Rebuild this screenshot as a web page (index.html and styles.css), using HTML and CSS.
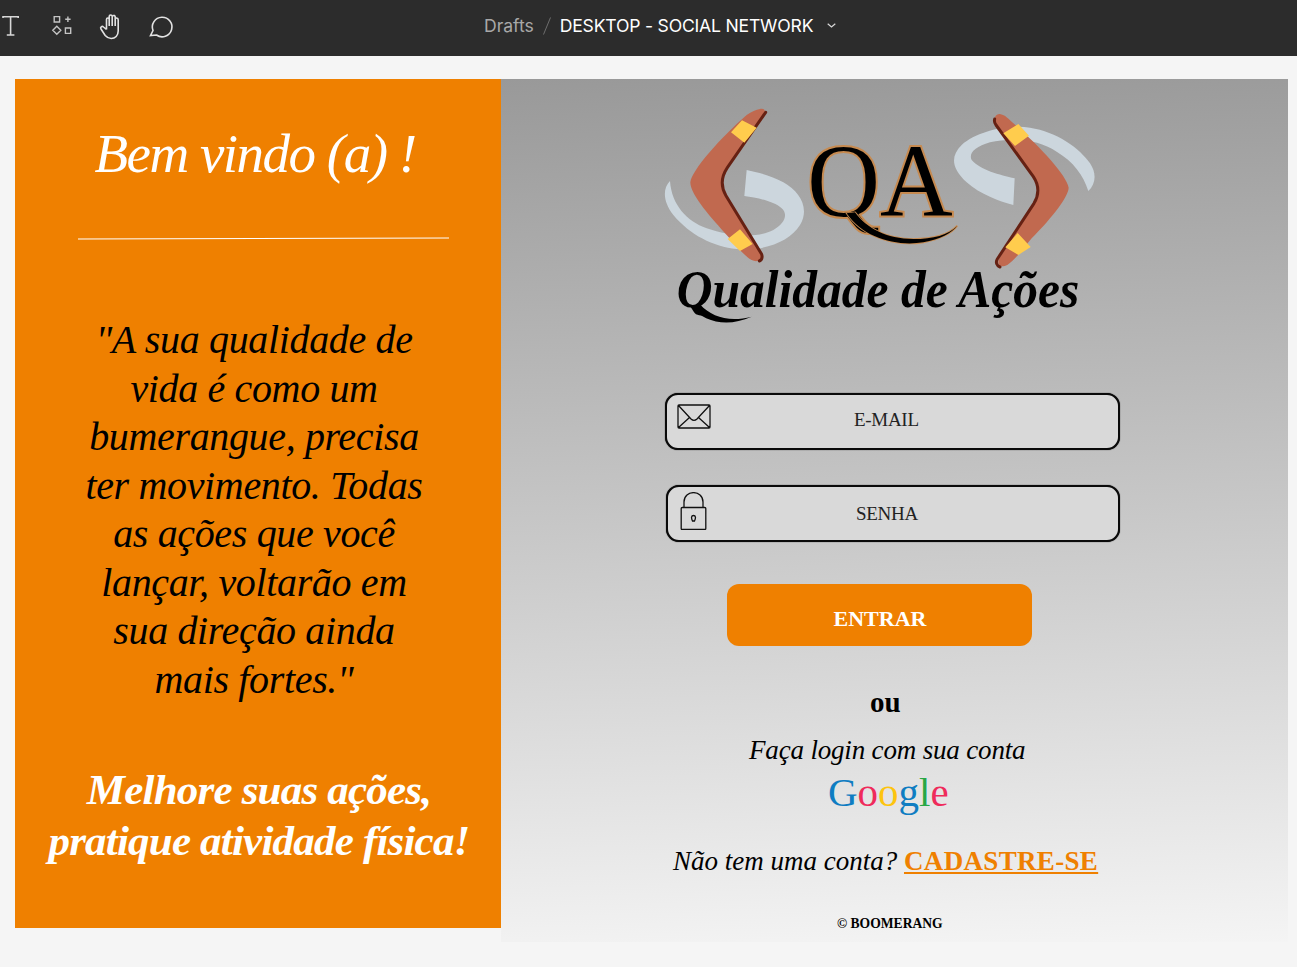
FILE: index.html
```html
<!DOCTYPE html>
<html lang="pt">
<head>
<meta charset="utf-8">
<title>DESKTOP - SOCIAL NETWORK</title>
<link rel="stylesheet" href="styles.css">
</head>
<body>
<header class="toolbar">
  <div class="tools">
    <svg class="tool tool-t" viewBox="0 0 24 28"><path d="M3 4V2.800H18.200V4M10.600 2.800V21M6.800 21H14.400"/></svg>
    <svg class="tool" viewBox="0 0 24 28"><path d="M4.200 2.600H9.600V8H4.200ZM15.200 5.300H20.600M17.900 2.600V8M2.800 16.300L6.800 12.300L10.800 16.300L6.800 20.300ZM15.400 14H20.700V19.400H15.400Z"/></svg>
    <svg class="tool tool-bright" viewBox="0 0 24 28"><path d="M6.500 15.500V5.500C6.500 3.500 9.200 3.500 9.200 5.500V2.500C9.200.5 12.200.5 12.200 2.500V3C12.200 1 15.200.8 15.200 3V5.500C15.200 3.500 18.200 3.500 18.200 6V17C18.200 21.500 15.200 24.500 11.200 24.500C8.200 24.500 6.600 23.100 5.200 21.500L1 15C-.2 13.400 2 11.600 3.500 13L6.500 15.500M9.200 5.500V12M12.200 3V12M15.200 3V12"/></svg>
    <svg class="tool tool-bright" viewBox="0 0 24 28"><path d="M.5 21.500L3 16.500A9.800 9.800 0 1 1 6.500 21Z"/></svg>
  </div>
  <nav class="crumbs">
    <span class="crumb-muted">Drafts</span>
    <svg class="slash" viewBox="0 0 8 18"><path d="M7.500.5L.5 17.500"/></svg>
    <span class="crumb-title">DESKTOP - SOCIAL NETWORK</span>
    <svg class="chevron" viewBox="0 0 9 5"><path d="M.7.7L4.500 4L8.300.7"/></svg>
  </nav>
</header>

<main class="frame">
  <section class="promo">
    <h1 class="promo-title">Bem vindo (a) !</h1>
    <div class="promo-rule"></div>
    <p class="promo-quote">"A sua qualidade de<br>vida é como um<br>bumerangue, precisa<br>ter movimento. Todas<br>as ações que você<br>lançar, voltarão em<br>sua direção ainda<br>mais fortes."</p>
    <p class="promo-cta">Melhore suas ações,<br>pratique atividade física!</p>
  </section>

  <section class="login">
    <svg class="logo" viewBox="0 0 1380 720">
      <path class="swoosh" d="M60 258C38 280 38 320 70 360C120 420 190 455 260 462C340 470 420 440 450 390C480 340 450 290 400 262C365 243 325 232 290 225L283 303C320 308 370 318 395 340C415 358 405 385 370 405C320 430 240 425 170 400C110 378 65 330 60 258Z"/>
      <path class="swoosh" d="M1315 288C1338 265 1340 235 1320 205C1290 160 1220 110 1140 98C1070 88 980 110 935 150C900 185 905 220 950 262C990 298 1050 320 1090 330L1094 250C1050 240 990 225 965 195C955 175 975 155 1020 142C1080 128 1160 130 1220 170C1270 200 1300 240 1315 288Z"/>
      <path class="boom" d="M330 42C345 38 350 50 340 68L228 220C210 248 210 275 226 302L330 472C340 492 325 505 305 495C280 482 250 440 230 420C190 375 120 300 121 262C125 225 215 125 290 60C305 50 318 44 330 42Z"/>
      <path class="boom-edge" d="M347 52L232 218C212 248 212 275 228 302L335 478C338 488 335 495 328 498"/>
      <path class="boom-band" d="M276 76L320 98L283 143L243 112ZM270 403L308 447L270 468L233 432Z"/>
      <path class="boom" d="M1048 57C1034 58 1030 72 1040 88L1150 245C1168 272 1168 298 1152 325L1048 490C1038 510 1052 520 1072 510C1095 495 1125 455 1145 430C1190 385 1255 310 1256 278C1250 240 1165 150 1085 80C1070 65 1060 58 1048 57Z"/>
      <path class="boom-edge" d="M1034 72C1032 80 1034 85 1038 90L1150 245C1168 272 1168 298 1152 325L1042 492C1036 502 1040 512 1050 516"/>
      <path class="boom-band" d="M1105 87L1137 122L1095 153L1060 115ZM1103 414L1142 456L1105 480L1066 457Z"/>
      <text class="logo-qa" x="472" y="362" textLength="436" lengthAdjust="spacingAndGlyphs">QA</text>
      <path class="qa-tail" d="M590 355C640 430 740 455 820 442C870 432 905 415 922 392C895 420 850 432 790 432C710 432 650 400 615 352Z"/>
      <text class="logo-name" x="80" y="637" textLength="1208" lengthAdjust="spacingAndGlyphs">Qualidade de Ações</text>
      <path class="name-tail" d="M118 632C165 682 230 698 305 665C240 682 185 668 150 628Z"/>
    </svg>

    <div class="field field-mail">
      <svg class="mail-icon" viewBox="0 0 34 25"><path d="M2 1H32C32.600 1 33 1.400 33 2V23C33 23.600 32.600 24 32 24H2C1.400 24 1 23.600 1 23V2C1 1.400 1.400 1 2 1ZM1.500 1.500L14 15C16 16.800 18 16.800 20 15L32.500 1.500M1.500 23.500L12.500 13.500M32.500 23.500L21.500 13.500"/></svg>
      <span class="field-label field-label-mail">E-MAIL</span>
    </div>
    <div class="field field-pass">
      <svg class="lock-icon" viewBox="0 0 27 38"><path d="M4 15.500V10C4-2.500 23-2.500 23 10V15.500M2.200 15.500H24.800C25.400 15.500 25.800 15.900 25.800 16.500V36.500C25.800 37.100 25.400 37.500 24.800 37.500H2.200C1.600 37.500 1.200 37.100 1.200 36.500V16.500C1.200 15.900 1.600 15.500 2.200 15.500ZM12.500 29C11 25.800 11.200 23.500 13.500 23.500C15.800 23.500 16 25.800 14.500 29Z"/></svg>
      <span class="field-label field-label-pass">SENHA</span>
    </div>

    <a class="enter" href="#">ENTRAR</a>
    <p class="or">ou</p>
    <p class="with">Faça login com sua conta</p>
    <p class="google"><span class="g-blue">G</span><span class="g-red">o</span><span class="g-yellow">o</span><span class="g-blue">g</span><span class="g-green">l</span><span class="g-red">e</span></p>
    <p class="signup">Não tem uma conta? <a class="signup-link" href="#">CADASTRE-SE</a></p>
    <p class="copy">© BOOMERANG</p>
  </section>
</main>
</body>
</html>
```
FILE: styles.css
```css
* { box-sizing: border-box; }
html, body { margin: 0; height: 967px; overflow: hidden; }
body { background: #f5f5f5; font-family: "Liberation Serif", serif; color: #000; }
p, h1 { margin: 0; font-weight: normal; }

.toolbar { height: 56px; background: #2c2c2c; display: flex; align-items: center; }
.tools { display: flex; gap: 26px; width: 484px; flex: none; }
.tool { width: 24px; height: 28px; fill: none; stroke: #c4c4c4; stroke-width: 1.400; overflow: visible; flex: none; }
.tool-t { stroke: #d8d8d8; stroke-width: 1.600; }
.tool-bright { stroke: #e2e2e2; stroke-width: 1.600; }
.crumbs { display: flex; align-items: center; margin-bottom: 5px; font-family: Inter, sans-serif; font-size: 17.600px; letter-spacing: -.2px; white-space: nowrap; }
.crumb-muted { color: #a8a8a8; letter-spacing: -.05px; }
.crumb-title { color: #fff; }
.slash { width: 8px; height: 18px; margin: 0 9px; fill: none; stroke: #6e6e6e; stroke-width: 1; }
.chevron { width: 9px; height: 5px; margin-left: 14px; fill: none; stroke: #d8d8d8; stroke-width: 1.200; }

.frame { display: flex; align-items: flex-start; margin: 23px 0 0 15px; }
.promo { width: 486px; height: 849px; background: #ef8000; flex: none; text-align: center; font-style: italic; }
.promo-title { color: #fff; font-size: 55px; line-height: 64px; letter-spacing: -1.500px; padding: 43px 0 0; width: 480px; }
.promo-rule { width: 371px; height: 1px; margin: 52px 0 0 63px; background: #fff; transform: rotate(-.15deg); }
.promo-quote { font-size: 40px; line-height: 48.500px; letter-spacing: -.35px; margin: 77px 0 0; width: 478px; }
.promo-cta { color: #fff; font-size: 43px; line-height: 51px; letter-spacing: -.8px; margin: 60px 0 0; width: 488px; font-weight: bold; }

.login { width: 787px; height: 863px; flex: none; display: flex; flex-direction: column; align-items: flex-start; background: linear-gradient(178deg, #999 0%, #f4f4f4 100%); }
.logo { width: 460px; height: 240px; margin: 16px 0 0 149px; flex: none; }
.swoosh { fill: #ccd6dd; }
.boom { fill: #c1694f; }
.boom-edge { fill: none; stroke: #662113; stroke-width: 9px; stroke-linecap: round; stroke-linejoin: round; }
.boom-band { fill: #ffcc4d; }
.logo-qa { font-family: "Liberation Serif", serif; font-size: 312px; fill: #000; stroke: #c68a50; stroke-width: 12px; paint-order: stroke; }
.qa-tail { fill: #000; stroke: #c68a50; stroke-width: 5px; paint-order: stroke; }
.logo-name { font-family: "Liberation Serif", serif; font-style: italic; font-weight: bold; font-size: 156px; fill: #000; }
.name-tail { fill: #000; }

.field { height: 57px; background: #d9d9d9; border: 2px solid #0a0a0a; box-shadow: 0 0 1px #000; border-radius: 13px; display: flex; align-items: center; flex: none; }
.field-mail { width: 455px; margin: 58px 0 0 164px; padding-left: 10px; }
.field-pass { width: 454px; margin: 35px 0 0 165px; padding-left: 12px; }
.mail-icon { width: 34px; height: 25px; fill: none; stroke: #111; stroke-width: 1.300; margin-top: -10px; flex: none; }
.lock-icon { width: 27px; height: 38px; fill: none; stroke: #111; stroke-width: 1.300; margin-top: -5px; flex: none; }
.field-label { font-size: 19px; letter-spacing: -.3px; color: #222; }
.field-label-mail { margin: -4px 0 0 143px; }
.field-label-pass { margin: 0 0 0 149px; }

.enter { width: 305px; height: 62px; margin: 42px 0 0 226px; padding: 8px 0 0 1px; background: #ef8000; border-radius: 12px; display: flex; align-items: center; justify-content: center; color: #fff; font-weight: bold; font-size: 22px; text-decoration: none; flex: none; }
.or { font-size: 29px; font-weight: bold; line-height: 32px; margin: 40px 0 0 369px; }
.with { font-size: 27px; font-style: italic; line-height: 34px; margin: 15px 0 0 248px; letter-spacing: -.17px; }
.google { font-size: 41px; line-height: 46px; margin: 2px 0 0 327px; }
.g-blue { color: #0f7dc2; }
.g-red { color: #ef2b5b; }
.g-yellow { color: #fdc40f; }
.g-green { color: #28a745; }
.signup { font-size: 27px; font-style: italic; line-height: 36px; margin: 28px 0 0 172px; white-space: nowrap; }
.signup-link { color: #ef8000; font-style: normal; font-weight: bold; letter-spacing: .33px; }
.copy { font-size: 13.600px; font-weight: bold; line-height: 16px; margin: 37px 0 0 336px; white-space: nowrap; }
```
